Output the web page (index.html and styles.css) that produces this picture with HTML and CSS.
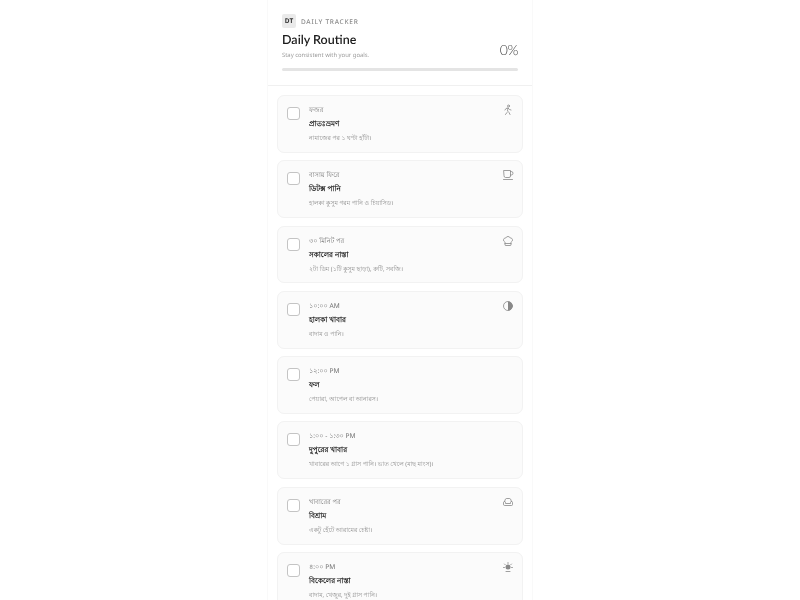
FILE: index.html
```html
<!DOCTYPE html>
<html lang="bn">
<head>
    <meta charset="UTF-8">
    <title>Daily Routine</title>
    <link rel="stylesheet" href="styles.css">
</head>
<body>

<div class="app">
    <header class="top">
        <div class="brand">
            <span class="badge">DT</span>
            <span class="label">DAILY TRACKER</span>
        </div>
        <div class="heading">
            <div>
                <h1>Daily Routine</h1>
                <p class="sub">Stay consistent with your goals.</p>
            </div>
            <span class="percent">0%</span>
        </div>
        <div class="bar"></div>
    </header>

    <div class="list">
        <div class="card">
            <span class="check"></span>
            <div class="body">
                <div class="time">ফজর</div>
                <div class="name">প্রাতঃভ্রমণ</div>
                <div class="note">নামাজের পর ১ ঘণ্টা হাঁটা।</div>
            </div>
            <svg class="icon" viewBox="0 0 24 24"><circle cx="13" cy="4" r="2"/><path d="M7 21l3-4"/><path d="M16 21l-2-4-3-3 1-6"/><path d="M6 12l2-3 4-1 3 3 3 1"/></svg>
        </div>
        <div class="card">
            <span class="check"></span>
            <div class="body">
                <div class="time">বাসায় ফিরে</div>
                <div class="name">ডিটক্স পানি</div>
                <div class="note">হালকা কুসুম গরম পানি ও চিয়াসিড।</div>
            </div>
            <svg class="icon" viewBox="0 0 24 24"><path d="M4 3h13v11a3 3 0 0 1-3 3H7a3 3 0 0 1-3-3z"/><path d="M17 5h1.500a3 3 0 0 1 0 7H17"/><path d="M3 21h18"/></svg>
        </div>
        <div class="card">
            <span class="check"></span>
            <div class="body">
                <div class="time">৩০ মিনিট পর</div>
                <div class="name">সকালের নাস্তা</div>
                <div class="note">২টা ডিম (১টি কুসুম ছাড়া), রুটি, সবজি।</div>
            </div>
            <svg class="icon" viewBox="0 0 24 24"><path d="M17 21a1 1 0 0 0 1-1v-5.350c0-.457.316-.844.727-1.041a4 4 0 0 0-2.134-7.589 5 5 0 0 0-9.186 0 4 4 0 0 0-2.134 7.588c.411.198.727.585.727 1.041V20a1 1 0 0 0 1 1Z"/><path d="M6 17h12"/></svg>
        </div>
        <div class="card">
            <span class="check"></span>
            <div class="body">
                <div class="time">১০:০০ AM</div>
                <div class="name">হালকা খাবার</div>
                <div class="note">বাদাম ও পানি।</div>
            </div>
            <svg class="icon" viewBox="0 0 24 24"><circle cx="12" cy="12" r="9"/><path class="solid" d="M12 3a9 9 0 0 1 0 18z"/></svg>
        </div>
        <div class="card">
            <span class="check"></span>
            <div class="body">
                <div class="time">১২:০০ PM</div>
                <div class="name">ফল</div>
                <div class="note">পেয়ারা, আপেল বা আনারস।</div>
            </div>
        </div>
        <div class="card">
            <span class="check"></span>
            <div class="body">
                <div class="time">১:০০ - ১:৩০ PM</div>
                <div class="name">দুপুরের খাবার</div>
                <div class="note">খাবারের আগে ১ গ্লাস পানি। ভাত খেলে (মাছ মাংস)।</div>
            </div>
        </div>
        <div class="card">
            <span class="check"></span>
            <div class="body">
                <div class="time">খাবারের পর</div>
                <div class="name">বিশ্রাম</div>
                <div class="note">একটু হেঁটে আরামের চেষ্টা।</div>
            </div>
            <svg class="icon" viewBox="0 0 24 24"><path d="M5 11l2-5a2 2 0 0 1 2-1h6a2 2 0 0 1 2 1l2 5"/><path d="M3 13a2 2 0 0 1 4 0v2h10v-2a2 2 0 0 1 4 0v4a2 2 0 0 1-2 2H5a2 2 0 0 1-2-2z"/></svg>
        </div>
        <div class="card">
            <span class="check"></span>
            <div class="body">
                <div class="time">৪:০০ PM</div>
                <div class="name">বিকেলের নাস্তা</div>
                <div class="note">বাদাম, খেজুর, দুই গ্লাস পানি।</div>
            </div>
            <svg class="icon" viewBox="0 0 24 24"><circle class="solid" cx="12" cy="12" r="5"/><path d="M12 3v2M5 6l1.500 1.500M19 6l-1.500 1.500M3 13h2M19 13h2M8 21h8"/></svg>
        </div>
    </div>
</div>

</body>
</html>
```

FILE: styles.css
```css
*{box-sizing:border-box}
html,body{
    margin:0;
    height:100%;
    overflow:hidden;
}
body{
    background:#fff;
    font-family:"Noto Sans",sans-serif;
    color:#222;
    text-rendering:geometricPrecision;
}
.app{
    width:266px;
    margin:0 auto;
    border-left:1px solid #f9f9f9;
    border-right:1px solid #f9f9f9;
    background:#fff;
    filter:blur(.5px);
}
.top{
    height:86px;
    padding:14px 14px 0;
    border-bottom:1px solid #f0f0f0;
}
.brand{
    display:flex;
    align-items:center;
    gap:5px;
}
.badge{
    width:14px;
    height:14px;
    border-radius:2px;
    background:#eaeaea;
    font-size:6.500px;
    font-weight:700;
    line-height:14px;
    text-align:center;
    color:#333;
}
.label{
    font-size:6.500px;
    font-weight:500;
    letter-spacing:.75px;
    color:#8a8a8a;
}
.heading{
    display:flex;
    justify-content:space-between;
    align-items:flex-end;
    margin-top:3px;
}
h1{
    margin:0;
    font-family:Lato,sans-serif;
    font-size:12.500px;
    font-weight:600;
    line-height:17px;
    color:#1c1c1c;
}
.sub{
    margin:2px 0 0;
    font-size:5.900px;
    line-height:10px;
    color:#9a9a9a;
}
.percent{
    position:relative;
    top:-1px;
    font-family:Lato,sans-serif;
    font-size:14px;
    font-weight:300;
    letter-spacing:-.4px;
    line-height:18px;
    color:#444;
}
.bar{
    height:3px;
    margin-top:8px;
    border-radius:2px;
    background:#e4e4e4;
}
.list{
    display:flex;
    flex-direction:column;
    gap:7.500px;
    padding:9px 9px 0;
}
.card{
    display:flex;
    height:57.800px;
    padding:10px 8px 0 9px;
    border:1px solid #f2f2f2;
    border-radius:7px;
    background:#fbfbfb;
}
.check{
    flex:none;
    width:13px;
    height:13px;
    margin-top:1px;
    border:1px solid #c4c4c4;
    border-radius:3px;
    background:#fff;
}
.body{
    flex:1;
    margin-left:9px;
    margin-top:-1px;
}
.time,.name,.note{
    line-height:10px;
}
.time{
    font-size:6.600px;
    color:#707070;
}
.name{
    margin-top:4px;
    font-size:7.200px;
    font-weight:600;
    color:#1a1a1a;
}
.note{
    margin-top:4px;
    font-size:6.100px;
    color:#8c8c8c;
}
.icon{
    flex:none;
    width:12px;
    height:12px;
    margin-top:-2px;
    fill:none;
    stroke:#888;
    stroke-width:1.600;
    stroke-linecap:round;
    stroke-linejoin:round;
}
.icon .solid{fill:#888;stroke:none}
```
